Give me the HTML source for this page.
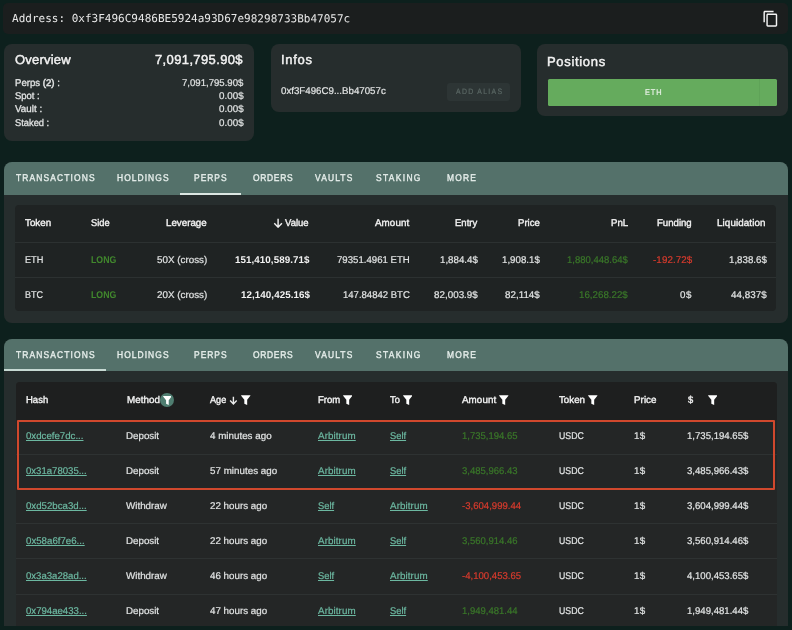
<!DOCTYPE html>
<html><head><meta charset="utf-8"><title>Address</title>
<style>
*{box-sizing:border-box;margin:0;padding:0}
html,body{width:792px;height:630px;overflow:hidden;background:#0d201d;font-family:"Liberation Sans",sans-serif}
.a{position:absolute}
.t{position:absolute;white-space:nowrap;line-height:14px;height:14px}
.n{font-weight:normal;-webkit-text-stroke:0.2px currentColor}
.m{font-weight:normal;-webkit-text-stroke:0.38px currentColor}
.b{font-weight:bold}
.n b{font-weight:normal;-webkit-text-stroke:0.38px currentColor}
.lab{-webkit-text-stroke:0.3px currentColor}
.lab b{font-weight:normal;-webkit-text-stroke:0.5px currentColor}
.hd{-webkit-text-stroke:0.45px currentColor}

.t{transform-origin:0 50%}
.tab{-webkit-text-stroke:0.38px currentColor}
.mono{font-family:"DejaVu Sans Mono","Liberation Mono",monospace}
</style></head><body><div id="root" style="position:absolute;left:0;top:0;width:792px;height:630px;will-change:transform">
<div class="a" style="left:3px;top:3px;width:785px;height:30.5px;background:#1b1e1e;border-radius:5px;"></div>
<svg class="a" style="left:761.600px;top:9.500px" width="17.400" height="17.400" viewBox="0 0 24 24"><path fill="#f2f2f2" d="M16 1H4c-1.100 0-2 .9-2 2v14h2V3h12V1zm3 4H8c-1.100 0-2 .9-2 2v14c0 1.100.9 2 2 2h11c1.100 0 2-.9 2-2V7c0-1.100-.9-2-2-2zm0 16H8V7h11v14z"/></svg>
<div class="a" style="left:4px;top:44px;width:250px;height:96.5px;background:#262d2d;border-radius:8px;"></div>
<div class="a" style="left:271px;top:44px;width:250px;height:67.5px;background:#262d2d;border-radius:8px;"></div>
<div class="a" style="left:537px;top:44px;width:251px;height:72px;background:#262d2d;border-radius:8px;"></div>
<div class="a" style="left:446.5px;top:82.5px;width:63.5px;height:18px;background:#2d3535;border-radius:3px;"></div>
<div class="a" style="left:547.5px;top:79px;width:229.6px;height:27px;background:#65ab5d;border-radius:1.5px;"></div>
<div class="a" style="left:758.5px;top:79px;width:1px;height:27px;background:#5fa358;border-radius:0px;"></div>
<div class="a" style="left:4px;top:162px;width:784px;height:160.5px;background:#262d2d;border-radius:8px;"></div>
<div class="a" style="left:4px;top:162px;width:784px;height:33px;background:#54716a;border-radius:8px 8px 0 0;"></div>
<div class="a" style="left:180.3px;top:192.8px;width:60.3px;height:1.8px;background:#dbe6e2;border-radius:0px;"></div>
<div class="a" style="left:15px;top:205px;width:761px;height:106px;background:#1f2323;border-radius:4px;"></div>
<div class="a" style="left:15px;top:242.3px;width:761px;height:1px;background:#2c3131;border-radius:0px;"></div>
<div class="a" style="left:15px;top:277px;width:761px;height:1px;background:#2c3131;border-radius:0px;"></div>
<div class="a" style="left:4px;top:338.5px;width:784px;height:292px;background:#262d2d;border-radius:8px 8px 0 0;"></div>
<div class="a" style="left:4px;top:338.5px;width:784px;height:32.5px;background:#54716a;border-radius:8px 8px 0 0;"></div>
<div class="a" style="left:4px;top:369px;width:101.5px;height:2px;background:#c6d9d3;border-radius:0px;"></div>
<div class="a" style="left:15.5px;top:382px;width:761px;height:250px;background:#242626;border-radius:4px;"></div>
<div class="a" style="left:15.5px;top:382px;width:761px;height:37.5px;background:#1e1f1f;border-radius:4px 4px 0 0;"></div>
<div class="a" style="left:15.5px;top:453.5px;width:761px;height:1px;background:#2e3232;border-radius:0px;"></div>
<div class="a" style="left:15.5px;top:523.3px;width:761px;height:1px;background:#2e3232;border-radius:0px;"></div>
<div class="a" style="left:15.5px;top:558.3px;width:761px;height:1px;background:#2e3232;border-radius:0px;"></div>
<div class="a" style="left:15.5px;top:593.5px;width:761px;height:1px;background:#2e3232;border-radius:0px;"></div>
<div class="a" style="left:16.600px;top:420.200px;width:758.200px;height:69.800px;border:2.300px solid #d0482d;border-radius:1px"></div>
<div class="a" style="left:0px;top:626px;width:792px;height:4px;background:#0d201d;border-radius:0px;"></div>
<svg class="a" style="left:273.2px;top:218.2px" width="10.2" height="10.2" viewBox="0 0 20 20"><path fill="none" stroke="#f2f2f2" stroke-width="2.8" d="M10 1.500V17M2.500 10.500L10 18L17.500 10.500"/></svg>
<div class="a" style="left:160px;top:392.800px;width:13.800px;height:13.800px;border-radius:50%;background:#4f7d70"></div>
<svg class="a" style="left:162.6px;top:395.6px" width="8.8" height="9.2" viewBox="0 0 20 21"><path fill="#fff" d="M0.800 0h18.400a.7.700 0 0 1 .55 1.150L13 9.600V20.300L7 17.800V9.600L.25 1.150A.7.700 0 0 1 .8 0z"/></svg>
<svg class="a" style="left:228.9px;top:395.9px" width="8.8" height="8.8" viewBox="0 0 20 20"><path fill="none" stroke="#ececec" stroke-width="3.2" d="M10 1.500V17M2.500 10.500L10 18L17.500 10.500"/></svg>
<svg class="a" style="left:241.3px;top:394.7px" width="9.5" height="10.5" viewBox="0 0 20 21"><path fill="#fff" d="M0.800 0h18.400a.7.700 0 0 1 .55 1.150L13 9.600V20.300L7 17.800V9.600L.25 1.150A.7.700 0 0 1 .8 0z"/></svg>
<svg class="a" style="left:342.7px;top:394.7px" width="9.5" height="10.5" viewBox="0 0 20 21"><path fill="#fff" d="M0.800 0h18.400a.7.700 0 0 1 .55 1.150L13 9.600V20.300L7 17.800V9.600L.25 1.150A.7.700 0 0 1 .8 0z"/></svg>
<svg class="a" style="left:402.8px;top:394.7px" width="9.5" height="10.5" viewBox="0 0 20 21"><path fill="#fff" d="M0.800 0h18.400a.7.700 0 0 1 .55 1.150L13 9.600V20.300L7 17.800V9.600L.25 1.150A.7.700 0 0 1 .8 0z"/></svg>
<svg class="a" style="left:499.0px;top:394.7px" width="9.5" height="10.5" viewBox="0 0 20 21"><path fill="#fff" d="M0.800 0h18.400a.7.700 0 0 1 .55 1.150L13 9.600V20.300L7 17.800V9.600L.25 1.150A.7.700 0 0 1 .8 0z"/></svg>
<svg class="a" style="left:588.0px;top:394.7px" width="9.5" height="10.5" viewBox="0 0 20 21"><path fill="#fff" d="M0.800 0h18.400a.7.700 0 0 1 .55 1.150L13 9.600V20.300L7 17.800V9.600L.25 1.150A.7.700 0 0 1 .8 0z"/></svg>
<svg class="a" style="left:707.6px;top:394.7px" width="9.5" height="10.5" viewBox="0 0 20 21"><path fill="#fff" d="M0.800 0h18.400a.7.700 0 0 1 .55 1.150L13 9.600V20.300L7 17.800V9.600L.25 1.150A.7.700 0 0 1 .8 0z"/></svg>
<div class="t mono" style="left:11.80px;top:12.00px;font-size:11px;color:#e8e8e8;letter-spacing:0.009px;transform:scaleX(1.0000) rotate(0.03deg);">Address: 0xf3F496C9486BE5924a93D67e98298733Bb47057c</div>
<div class="t m hd" style="left:14.80px;top:53.30px;font-size:13.0px;color:#f2f2f2;letter-spacing:0.202px;transform:scaleX(1.0000) rotate(0.03deg);">Overview</div>
<div class="t m hd" style="left:155.40px;top:53.30px;font-size:13.0px;color:#f2f2f2;letter-spacing:0.372px;transform:scaleX(1.0000) rotate(0.03deg);">7,091,795.90$</div>
<div class="t m lab" style="left:14.80px;top:76.00px;font-size:9.8px;color:#e2e4e4;letter-spacing:0.000px;transform:scaleX(0.9811) rotate(0.03deg);">Perps <b>(2)</b> :</div>
<div class="t n" style="left:182.01px;top:76.00px;font-size:9.8px;color:#e2e4e4;letter-spacing:0.000px;transform:scaleX(0.9797) rotate(0.03deg);">7,091,795.90$</div>
<div class="t m lab" style="left:14.80px;top:89.00px;font-size:9.8px;color:#e2e4e4;letter-spacing:0.000px;transform:scaleX(0.9645) rotate(0.03deg);">Spot :</div>
<div class="t n" style="left:218.61px;top:89.00px;font-size:9.8px;color:#e2e4e4;letter-spacing:0.063px;transform:scaleX(1.0000) rotate(0.03deg);">0.00$</div>
<div class="t m lab" style="left:14.80px;top:102.30px;font-size:9.8px;color:#e2e4e4;letter-spacing:0.026px;transform:scaleX(1.0000) rotate(0.03deg);">Vault :</div>
<div class="t n" style="left:218.61px;top:102.30px;font-size:9.8px;color:#e2e4e4;letter-spacing:0.063px;transform:scaleX(1.0000) rotate(0.03deg);">0.00$</div>
<div class="t m lab" style="left:14.80px;top:115.60px;font-size:9.8px;color:#e2e4e4;letter-spacing:0.000px;transform:scaleX(0.9512) rotate(0.03deg);">Staked :</div>
<div class="t n" style="left:218.61px;top:115.60px;font-size:9.8px;color:#e2e4e4;letter-spacing:0.063px;transform:scaleX(1.0000) rotate(0.03deg);">0.00$</div>
<div class="t m hd" style="left:281.40px;top:53.40px;font-size:13.0px;color:#f2f2f2;letter-spacing:0.703px;transform:scaleX(1.0000) rotate(0.03deg);">Infos</div>
<div class="t n" style="left:281.01px;top:84.00px;font-size:9.8px;color:#e2e4e4;letter-spacing:0.000px;transform:scaleX(0.9916) rotate(0.03deg);">0xf3F496C9...Bb47057c</div>
<div class="t n" style="left:455.89px;top:84.50px;font-size:7.8px;color:#5a6764;letter-spacing:1.498px;transform:scaleX(0.8800) rotate(0.03deg);">ADD ALIAS</div>
<div class="t m hd" style="left:547.40px;top:54.60px;font-size:13.0px;color:#f2f2f2;letter-spacing:0.681px;transform:scaleX(1.0000) rotate(0.03deg);">Positions</div>
<div class="t n" style="left:645.47px;top:86.00px;font-size:8.2px;color:#eaf3e8;letter-spacing:1.066px;transform:scaleX(0.9000) rotate(0.03deg);">ETH</div>
<div class="t m tab" style="left:15.70px;top:171.20px;font-size:9.8px;color:#e6eeeb;letter-spacing:1.321px;transform:scaleX(0.8600) rotate(0.03deg);">TRANSACTIONS</div>
<div class="t m tab" style="left:117.20px;top:171.20px;font-size:9.8px;color:#e6eeeb;letter-spacing:1.245px;transform:scaleX(0.8600) rotate(0.03deg);">HOLDINGS</div>
<div class="t m tab" style="left:194.40px;top:171.20px;font-size:9.8px;color:#e6eeeb;letter-spacing:1.172px;transform:scaleX(0.8600) rotate(0.03deg);">PERPS</div>
<div class="t m tab" style="left:252.50px;top:171.20px;font-size:9.8px;color:#e6eeeb;letter-spacing:0.825px;transform:scaleX(0.8600) rotate(0.03deg);">ORDERS</div>
<div class="t m tab" style="left:315.40px;top:171.20px;font-size:9.8px;color:#e6eeeb;letter-spacing:1.340px;transform:scaleX(0.8600) rotate(0.03deg);">VAULTS</div>
<div class="t m tab" style="left:375.70px;top:171.20px;font-size:9.8px;color:#e6eeeb;letter-spacing:1.558px;transform:scaleX(0.8600) rotate(0.03deg);">STAKING</div>
<div class="t m tab" style="left:447.40px;top:171.20px;font-size:9.8px;color:#e6eeeb;letter-spacing:1.361px;transform:scaleX(0.8600) rotate(0.03deg);">MORE</div>
<div class="t m tab" style="left:15.70px;top:347.60px;font-size:9.8px;color:#e6eeeb;letter-spacing:1.321px;transform:scaleX(0.8600) rotate(0.03deg);">TRANSACTIONS</div>
<div class="t m tab" style="left:117.20px;top:347.60px;font-size:9.8px;color:#e6eeeb;letter-spacing:1.245px;transform:scaleX(0.8600) rotate(0.03deg);">HOLDINGS</div>
<div class="t m tab" style="left:194.40px;top:347.60px;font-size:9.8px;color:#e6eeeb;letter-spacing:1.172px;transform:scaleX(0.8600) rotate(0.03deg);">PERPS</div>
<div class="t m tab" style="left:252.50px;top:347.60px;font-size:9.8px;color:#e6eeeb;letter-spacing:0.825px;transform:scaleX(0.8600) rotate(0.03deg);">ORDERS</div>
<div class="t m tab" style="left:315.40px;top:347.60px;font-size:9.8px;color:#e6eeeb;letter-spacing:1.340px;transform:scaleX(0.8600) rotate(0.03deg);">VAULTS</div>
<div class="t m tab" style="left:375.70px;top:347.60px;font-size:9.8px;color:#e6eeeb;letter-spacing:1.558px;transform:scaleX(0.8600) rotate(0.03deg);">STAKING</div>
<div class="t m tab" style="left:447.40px;top:347.60px;font-size:9.8px;color:#e6eeeb;letter-spacing:1.361px;transform:scaleX(0.8600) rotate(0.03deg);">MORE</div>
<div class="t m" style="left:25.10px;top:216.10px;font-size:9.8px;color:#f2f2f2;letter-spacing:0.011px;transform:scaleX(1.0000) rotate(0.03deg);">Token</div>
<div class="t m" style="left:91.00px;top:216.10px;font-size:9.8px;color:#f2f2f2;letter-spacing:0.000px;transform:scaleX(0.9485) rotate(0.03deg);">Side</div>
<div class="t m" style="left:166.10px;top:216.10px;font-size:9.8px;color:#f2f2f2;letter-spacing:0.000px;transform:scaleX(0.9961) rotate(0.03deg);">Leverage</div>
<div class="t m" style="left:285.40px;top:216.10px;font-size:9.8px;color:#f2f2f2;letter-spacing:0.000px;transform:scaleX(0.9694) rotate(0.03deg);">Value</div>
<div class="t m" style="left:375.00px;top:216.10px;font-size:9.8px;color:#f2f2f2;letter-spacing:0.087px;transform:scaleX(1.0000) rotate(0.03deg);">Amount</div>
<div class="t m" style="left:455.20px;top:216.10px;font-size:9.8px;color:#f2f2f2;letter-spacing:0.000px;transform:scaleX(0.9705) rotate(0.03deg);">Entry</div>
<div class="t m" style="left:517.90px;top:216.10px;font-size:9.8px;color:#f2f2f2;letter-spacing:0.000px;transform:scaleX(0.9808) rotate(0.03deg);">Price</div>
<div class="t m" style="left:611.00px;top:216.10px;font-size:9.8px;color:#f2f2f2;letter-spacing:0.000px;transform:scaleX(0.9864) rotate(0.03deg);">PnL</div>
<div class="t m" style="left:656.50px;top:216.10px;font-size:9.8px;color:#f2f2f2;letter-spacing:0.000px;transform:scaleX(0.9801) rotate(0.03deg);">Funding</div>
<div class="t m" style="left:717.40px;top:216.10px;font-size:9.8px;color:#f2f2f2;letter-spacing:0.109px;transform:scaleX(1.0000) rotate(0.03deg);">Liquidation</div>
<div class="t n" style="left:24.91px;top:252.50px;font-size:9.8px;color:#e2e4e4;letter-spacing:0.000px;transform:scaleX(0.9375) rotate(0.03deg);">ETH</div>
<div class="t n" style="left:24.91px;top:287.80px;font-size:9.8px;color:#e2e4e4;letter-spacing:0.000px;transform:scaleX(0.9171) rotate(0.03deg);">BTC</div>
<div class="t b" style="left:90.81px;top:252.50px;font-size:9.8px;color:#41882d;letter-spacing:0.000px;transform:scaleX(0.8930) rotate(0.03deg);">LONG</div>
<div class="t b" style="left:90.81px;top:287.80px;font-size:9.8px;color:#41882d;letter-spacing:0.000px;transform:scaleX(0.8930) rotate(0.03deg);">LONG</div>
<div class="t n" style="left:157.21px;top:252.50px;font-size:9.8px;color:#e2e4e4;letter-spacing:0.019px;transform:scaleX(1.0000) rotate(0.03deg);">50X (cross)</div>
<div class="t n" style="left:157.21px;top:287.80px;font-size:9.8px;color:#e2e4e4;letter-spacing:0.019px;transform:scaleX(1.0000) rotate(0.03deg);">20X (cross)</div>
<div class="t b" style="left:235.01px;top:252.50px;font-size:9.8px;color:#f2f2f2;letter-spacing:0.066px;transform:scaleX(1.0000) rotate(0.03deg);">151,410,589.71$</div>
<div class="t b" style="left:240.51px;top:287.80px;font-size:9.8px;color:#f2f2f2;letter-spacing:0.067px;transform:scaleX(1.0000) rotate(0.03deg);">12,140,425.16$</div>
<div class="t n" style="left:337.01px;top:252.50px;font-size:9.8px;color:#e2e4e4;letter-spacing:0.000px;transform:scaleX(0.9825) rotate(0.03deg);">79351.4961 ETH</div>
<div class="t n" style="left:343.01px;top:287.80px;font-size:9.8px;color:#e2e4e4;letter-spacing:0.000px;transform:scaleX(0.9730) rotate(0.03deg);">147.84842 BTC</div>
<div class="t n" style="left:440.21px;top:252.50px;font-size:9.8px;color:#e2e4e4;letter-spacing:0.000px;transform:scaleX(0.9906) rotate(0.03deg);">1,884.4$</div>
<div class="t n" style="left:434.21px;top:287.80px;font-size:9.8px;color:#e2e4e4;letter-spacing:0.024px;transform:scaleX(1.0000) rotate(0.03deg);">82,003.9$</div>
<div class="t n" style="left:502.31px;top:252.50px;font-size:9.8px;color:#e2e4e4;letter-spacing:0.000px;transform:scaleX(0.9906) rotate(0.03deg);">1,908.1$</div>
<div class="t n" style="left:505.31px;top:287.80px;font-size:9.8px;color:#e2e4e4;letter-spacing:0.016px;transform:scaleX(1.0000) rotate(0.03deg);">82,114$</div>
<div class="t n" style="left:567.41px;top:252.50px;font-size:9.8px;color:#3a7829;letter-spacing:0.000px;transform:scaleX(0.9701) rotate(0.03deg);">1,880,448.64$</div>
<div class="t n" style="left:579.41px;top:287.80px;font-size:9.8px;color:#3a7829;letter-spacing:0.000px;transform:scaleX(0.9946) rotate(0.03deg);">16,268.22$</div>
<div class="t n" style="left:652.51px;top:252.50px;font-size:9.8px;color:#d93b2d;letter-spacing:0.085px;transform:scaleX(1.0000) rotate(0.03deg);">-192.72$</div>
<div class="t n" style="left:680.41px;top:287.80px;font-size:9.8px;color:#e2e4e4;letter-spacing:0.478px;transform:scaleX(1.0000) rotate(0.03deg);">0$</div>
<div class="t n" style="left:728.81px;top:252.50px;font-size:9.8px;color:#e2e4e4;letter-spacing:0.000px;transform:scaleX(0.9906) rotate(0.03deg);">1,838.6$</div>
<div class="t n" style="left:731.01px;top:287.80px;font-size:9.8px;color:#e2e4e4;letter-spacing:0.027px;transform:scaleX(1.0000) rotate(0.03deg);">44,837$</div>
<div class="t m" style="left:25.80px;top:392.70px;font-size:9.8px;color:#f2f2f2;letter-spacing:0.000px;transform:scaleX(0.9705) rotate(0.03deg);">Hash</div>
<div class="t m" style="left:126.60px;top:392.70px;font-size:9.8px;color:#f2f2f2;letter-spacing:0.062px;transform:scaleX(1.0000) rotate(0.03deg);">Method</div>
<div class="t m" style="left:210.20px;top:392.70px;font-size:9.8px;color:#f2f2f2;letter-spacing:0.000px;transform:scaleX(0.9290) rotate(0.03deg);">Age</div>
<div class="t m" style="left:317.60px;top:392.70px;font-size:9.8px;color:#f2f2f2;letter-spacing:0.000px;transform:scaleX(0.9712) rotate(0.03deg);">From</div>
<div class="t m" style="left:390.10px;top:392.70px;font-size:9.8px;color:#f2f2f2;letter-spacing:0.000px;transform:scaleX(0.9460) rotate(0.03deg);">To</div>
<div class="t m" style="left:462.00px;top:392.70px;font-size:9.8px;color:#f2f2f2;letter-spacing:0.087px;transform:scaleX(1.0000) rotate(0.03deg);">Amount</div>
<div class="t m" style="left:559.20px;top:392.70px;font-size:9.8px;color:#f2f2f2;letter-spacing:0.000px;transform:scaleX(0.9940) rotate(0.03deg);">Token</div>
<div class="t m" style="left:634.20px;top:392.70px;font-size:9.8px;color:#f2f2f2;letter-spacing:0.043px;transform:scaleX(1.0000) rotate(0.03deg);">Price</div>
<div class="t m" style="left:687.60px;top:392.70px;font-size:9.8px;color:#f2f2f2;letter-spacing:0.000px;transform:scaleX(0.9536) rotate(0.03deg);">$</div>
<div class="t n" style="left:26.10px;top:428.60px;font-size:9.8px;color:#6cb8a1;letter-spacing:0.000px;transform:scaleX(0.9866) rotate(0.03deg);text-decoration:underline;">0xdcefe7dc...</div>
<div class="t n" style="left:126.41px;top:428.60px;font-size:9.8px;color:#e2e4e4;letter-spacing:0.000px;transform:scaleX(0.9959) rotate(0.03deg);">Deposit</div>
<div class="t n" style="left:210.01px;top:428.60px;font-size:9.8px;color:#e2e4e4;letter-spacing:0.003px;transform:scaleX(1.0000) rotate(0.03deg);">4 minutes ago</div>
<div class="t n" style="left:317.90px;top:428.60px;font-size:9.8px;color:#6cb8a1;letter-spacing:0.096px;transform:scaleX(1.0000) rotate(0.03deg);text-decoration:underline;">Arbitrum</div>
<div class="t n" style="left:390.40px;top:428.60px;font-size:9.8px;color:#6cb8a1;letter-spacing:0.000px;transform:scaleX(0.9532) rotate(0.03deg);text-decoration:underline;">Self</div>
<div class="t n" style="left:461.81px;top:428.60px;font-size:9.8px;color:#3a7829;letter-spacing:0.000px;transform:scaleX(0.9717) rotate(0.03deg);">1,735,194.65</div>
<div class="t n" style="left:559.01px;top:428.60px;font-size:9.8px;color:#e2e4e4;letter-spacing:0.000px;transform:scaleX(0.8926) rotate(0.03deg);">USDC</div>
<div class="t n" style="left:634.01px;top:428.60px;font-size:9.8px;color:#e2e4e4;letter-spacing:0.278px;transform:scaleX(1.0000) rotate(0.03deg);">1$</div>
<div class="t n" style="left:687.41px;top:428.60px;font-size:9.8px;color:#e2e4e4;letter-spacing:0.000px;transform:scaleX(0.9797) rotate(0.03deg);">1,735,194.65$</div>
<div class="t n" style="left:26.10px;top:463.60px;font-size:9.8px;color:#6cb8a1;letter-spacing:0.000px;transform:scaleX(0.9773) rotate(0.03deg);text-decoration:underline;">0x31a78035...</div>
<div class="t n" style="left:126.41px;top:463.60px;font-size:9.8px;color:#e2e4e4;letter-spacing:0.000px;transform:scaleX(0.9959) rotate(0.03deg);">Deposit</div>
<div class="t n" style="left:210.01px;top:463.60px;font-size:9.8px;color:#e2e4e4;letter-spacing:0.014px;transform:scaleX(1.0000) rotate(0.03deg);">57 minutes ago</div>
<div class="t n" style="left:317.90px;top:463.60px;font-size:9.8px;color:#6cb8a1;letter-spacing:0.096px;transform:scaleX(1.0000) rotate(0.03deg);text-decoration:underline;">Arbitrum</div>
<div class="t n" style="left:390.40px;top:463.60px;font-size:9.8px;color:#6cb8a1;letter-spacing:0.000px;transform:scaleX(0.9532) rotate(0.03deg);text-decoration:underline;">Self</div>
<div class="t n" style="left:461.81px;top:463.60px;font-size:9.8px;color:#3a7829;letter-spacing:0.000px;transform:scaleX(0.9717) rotate(0.03deg);">3,485,966.43</div>
<div class="t n" style="left:559.01px;top:463.60px;font-size:9.8px;color:#e2e4e4;letter-spacing:0.000px;transform:scaleX(0.8926) rotate(0.03deg);">USDC</div>
<div class="t n" style="left:634.01px;top:463.60px;font-size:9.8px;color:#e2e4e4;letter-spacing:0.278px;transform:scaleX(1.0000) rotate(0.03deg);">1$</div>
<div class="t n" style="left:687.41px;top:463.60px;font-size:9.8px;color:#e2e4e4;letter-spacing:0.000px;transform:scaleX(0.9797) rotate(0.03deg);">3,485,966.43$</div>
<div class="t n" style="left:26.10px;top:498.60px;font-size:9.8px;color:#6cb8a1;letter-spacing:0.000px;transform:scaleX(0.9860) rotate(0.03deg);text-decoration:underline;">0xd52bca3d...</div>
<div class="t n" style="left:126.41px;top:498.60px;font-size:9.8px;color:#e2e4e4;letter-spacing:0.006px;transform:scaleX(1.0000) rotate(0.03deg);">Withdraw</div>
<div class="t n" style="left:210.01px;top:498.60px;font-size:9.8px;color:#e2e4e4;letter-spacing:0.000px;transform:scaleX(0.9979) rotate(0.03deg);">22 hours ago</div>
<div class="t n" style="left:317.90px;top:498.60px;font-size:9.8px;color:#6cb8a1;letter-spacing:0.000px;transform:scaleX(0.9532) rotate(0.03deg);text-decoration:underline;">Self</div>
<div class="t n" style="left:390.40px;top:498.60px;font-size:9.8px;color:#6cb8a1;letter-spacing:0.096px;transform:scaleX(1.0000) rotate(0.03deg);text-decoration:underline;">Arbitrum</div>
<div class="t n" style="left:461.81px;top:498.60px;font-size:9.8px;color:#d93b2d;letter-spacing:0.000px;transform:scaleX(0.9788) rotate(0.03deg);">-3,604,999.44</div>
<div class="t n" style="left:559.01px;top:498.60px;font-size:9.8px;color:#e2e4e4;letter-spacing:0.000px;transform:scaleX(0.8926) rotate(0.03deg);">USDC</div>
<div class="t n" style="left:634.01px;top:498.60px;font-size:9.8px;color:#e2e4e4;letter-spacing:0.278px;transform:scaleX(1.0000) rotate(0.03deg);">1$</div>
<div class="t n" style="left:687.41px;top:498.60px;font-size:9.8px;color:#e2e4e4;letter-spacing:0.000px;transform:scaleX(0.9797) rotate(0.03deg);">3,604,999.44$</div>
<div class="t n" style="left:26.10px;top:533.60px;font-size:9.8px;color:#6cb8a1;letter-spacing:0.000px;transform:scaleX(0.9886) rotate(0.03deg);text-decoration:underline;">0x58a6f7e6...</div>
<div class="t n" style="left:126.41px;top:533.60px;font-size:9.8px;color:#e2e4e4;letter-spacing:0.000px;transform:scaleX(0.9959) rotate(0.03deg);">Deposit</div>
<div class="t n" style="left:210.01px;top:533.60px;font-size:9.8px;color:#e2e4e4;letter-spacing:0.000px;transform:scaleX(0.9979) rotate(0.03deg);">22 hours ago</div>
<div class="t n" style="left:317.90px;top:533.60px;font-size:9.8px;color:#6cb8a1;letter-spacing:0.096px;transform:scaleX(1.0000) rotate(0.03deg);text-decoration:underline;">Arbitrum</div>
<div class="t n" style="left:390.40px;top:533.60px;font-size:9.8px;color:#6cb8a1;letter-spacing:0.000px;transform:scaleX(0.9532) rotate(0.03deg);text-decoration:underline;">Self</div>
<div class="t n" style="left:461.81px;top:533.60px;font-size:9.8px;color:#3a7829;letter-spacing:0.000px;transform:scaleX(0.9717) rotate(0.03deg);">3,560,914.46</div>
<div class="t n" style="left:559.01px;top:533.60px;font-size:9.8px;color:#e2e4e4;letter-spacing:0.000px;transform:scaleX(0.8926) rotate(0.03deg);">USDC</div>
<div class="t n" style="left:634.01px;top:533.60px;font-size:9.8px;color:#e2e4e4;letter-spacing:0.278px;transform:scaleX(1.0000) rotate(0.03deg);">1$</div>
<div class="t n" style="left:687.41px;top:533.60px;font-size:9.8px;color:#e2e4e4;letter-spacing:0.000px;transform:scaleX(0.9797) rotate(0.03deg);">3,560,914.46$</div>
<div class="t n" style="left:26.10px;top:568.60px;font-size:9.8px;color:#6cb8a1;letter-spacing:0.000px;transform:scaleX(0.9773) rotate(0.03deg);text-decoration:underline;">0x3a3a28ad...</div>
<div class="t n" style="left:126.41px;top:568.60px;font-size:9.8px;color:#e2e4e4;letter-spacing:0.006px;transform:scaleX(1.0000) rotate(0.03deg);">Withdraw</div>
<div class="t n" style="left:210.01px;top:568.60px;font-size:9.8px;color:#e2e4e4;letter-spacing:0.000px;transform:scaleX(0.9979) rotate(0.03deg);">46 hours ago</div>
<div class="t n" style="left:317.90px;top:568.60px;font-size:9.8px;color:#6cb8a1;letter-spacing:0.000px;transform:scaleX(0.9532) rotate(0.03deg);text-decoration:underline;">Self</div>
<div class="t n" style="left:390.40px;top:568.60px;font-size:9.8px;color:#6cb8a1;letter-spacing:0.096px;transform:scaleX(1.0000) rotate(0.03deg);text-decoration:underline;">Arbitrum</div>
<div class="t n" style="left:461.81px;top:568.60px;font-size:9.8px;color:#d93b2d;letter-spacing:0.000px;transform:scaleX(0.9788) rotate(0.03deg);">-4,100,453.65</div>
<div class="t n" style="left:559.01px;top:568.60px;font-size:9.8px;color:#e2e4e4;letter-spacing:0.000px;transform:scaleX(0.8926) rotate(0.03deg);">USDC</div>
<div class="t n" style="left:634.01px;top:568.60px;font-size:9.8px;color:#e2e4e4;letter-spacing:0.278px;transform:scaleX(1.0000) rotate(0.03deg);">1$</div>
<div class="t n" style="left:687.41px;top:568.60px;font-size:9.8px;color:#e2e4e4;letter-spacing:0.000px;transform:scaleX(0.9797) rotate(0.03deg);">4,100,453.65$</div>
<div class="t n" style="left:26.10px;top:603.60px;font-size:9.8px;color:#6cb8a1;letter-spacing:0.000px;transform:scaleX(0.9805) rotate(0.03deg);text-decoration:underline;">0x794ae433...</div>
<div class="t n" style="left:126.41px;top:603.60px;font-size:9.8px;color:#e2e4e4;letter-spacing:0.000px;transform:scaleX(0.9959) rotate(0.03deg);">Deposit</div>
<div class="t n" style="left:210.01px;top:603.60px;font-size:9.8px;color:#e2e4e4;letter-spacing:0.000px;transform:scaleX(0.9979) rotate(0.03deg);">47 hours ago</div>
<div class="t n" style="left:317.90px;top:603.60px;font-size:9.8px;color:#6cb8a1;letter-spacing:0.096px;transform:scaleX(1.0000) rotate(0.03deg);text-decoration:underline;">Arbitrum</div>
<div class="t n" style="left:390.40px;top:603.60px;font-size:9.8px;color:#6cb8a1;letter-spacing:0.000px;transform:scaleX(0.9532) rotate(0.03deg);text-decoration:underline;">Self</div>
<div class="t n" style="left:461.81px;top:603.60px;font-size:9.8px;color:#3a7829;letter-spacing:0.000px;transform:scaleX(0.9717) rotate(0.03deg);">1,949,481.44</div>
<div class="t n" style="left:559.01px;top:603.60px;font-size:9.8px;color:#e2e4e4;letter-spacing:0.000px;transform:scaleX(0.8926) rotate(0.03deg);">USDC</div>
<div class="t n" style="left:634.01px;top:603.60px;font-size:9.8px;color:#e2e4e4;letter-spacing:0.278px;transform:scaleX(1.0000) rotate(0.03deg);">1$</div>
<div class="t n" style="left:687.41px;top:603.60px;font-size:9.8px;color:#e2e4e4;letter-spacing:0.000px;transform:scaleX(0.9797) rotate(0.03deg);">1,949,481.44$</div>
</div></body></html>
